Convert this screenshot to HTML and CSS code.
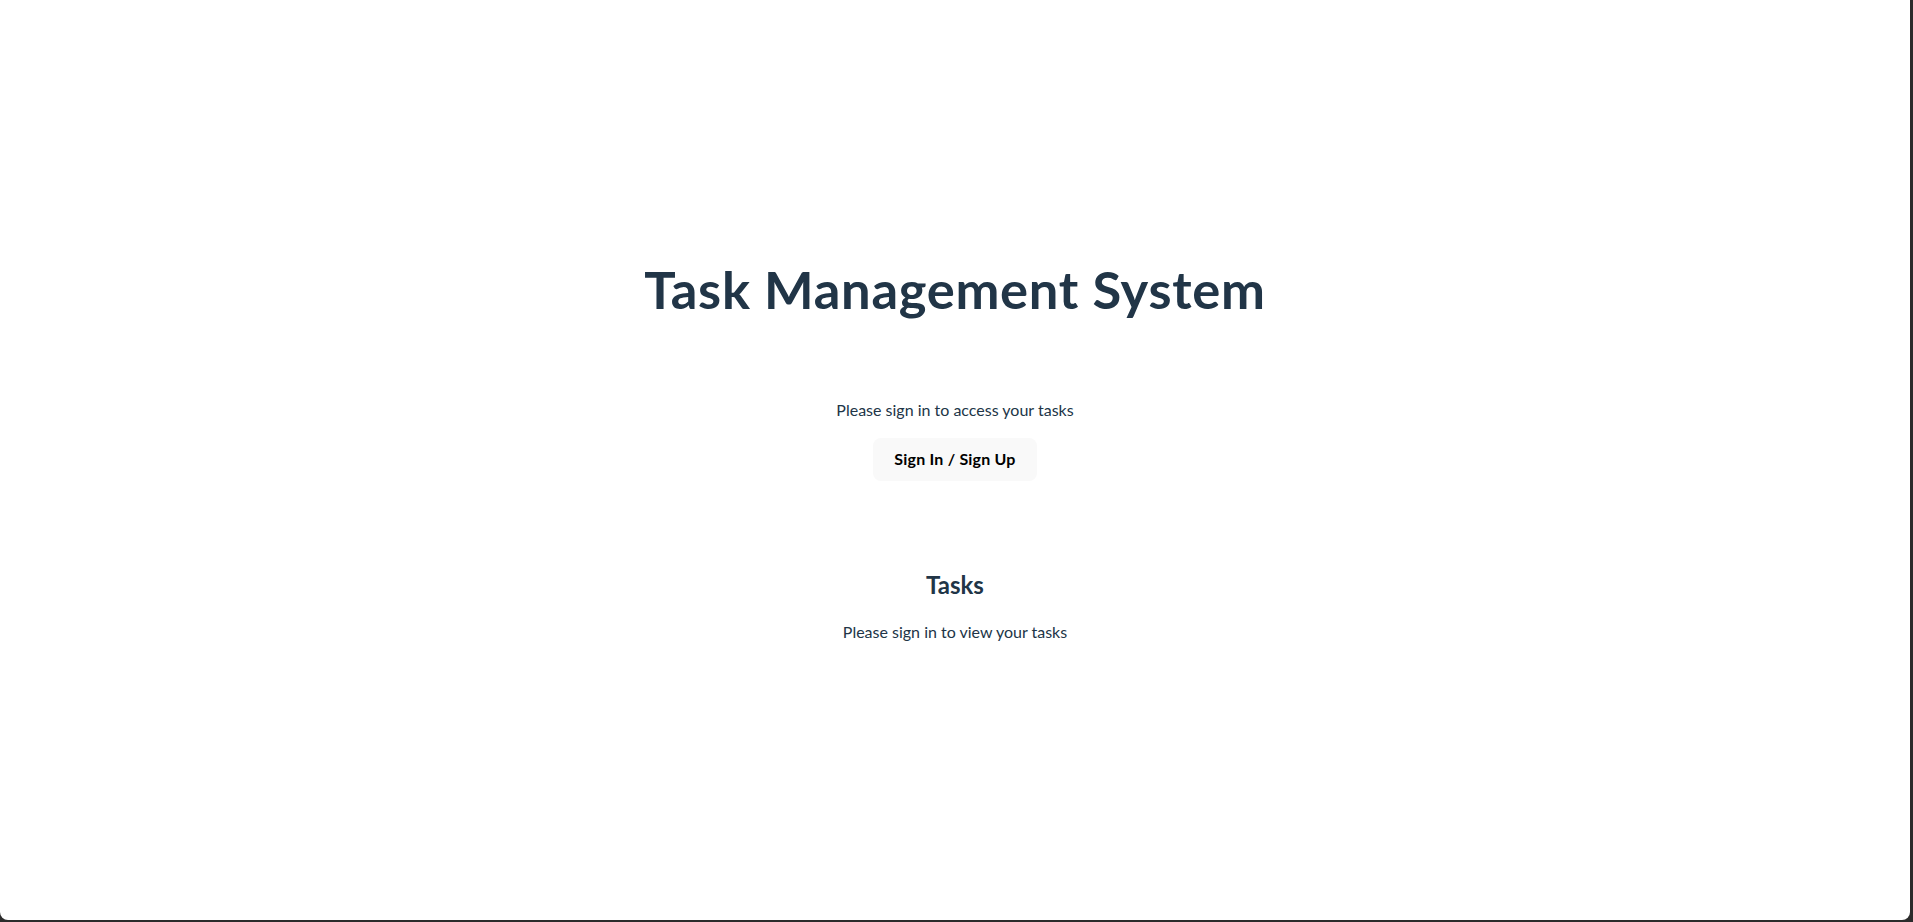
FILE: index.html
```html
<!DOCTYPE html>
<html lang="en">
<head>
<meta charset="utf-8">
<title>Task Management System</title>
<link rel="stylesheet" href="styles.css">
</head>
<body>
<div class="window">
  <main class="app">
    <h1 class="title">Task Management System</h1>
    <section class="card">
      <p class="note">Please sign in to access your tasks</p>
      <button class="btn" type="button">Sign In / Sign Up</button>
    </section>
    <section class="tasks">
      <h2 class="tasks-title">Tasks</h2>
      <p class="note">Please sign in to view your tasks</p>
    </section>
  </main>
</div>
</body>
</html>
```
FILE: styles.css
```css
html {
  background: #2b2b2b;
}
body {
  margin: 0;
  font-family: Lato, "Open Sans", sans-serif;
  color: #213547;
  line-height: 1.5;
  font-size: 16px;
}
.window {
  width: 1910px;
  height: 920px;
  background: #ffffff;
  border-radius: 0 0 8px 8px;
  overflow: hidden;
}
.app {
  display: flex;
  flex-direction: column;
  align-items: center;
  text-align: center;
  padding-top: 260px;
}
.title {
  margin: 0;
  font-size: 52.5px;
  line-height: 1.1;
  font-weight: 700;
  letter-spacing: 0.7px;
}
.card {
  margin-top: 80px;
  display: flex;
  flex-direction: column;
  align-items: center;
  gap: 16px;
}
.note {
  margin: 0;
  font-size: 16px;
  line-height: 24px;
}
.btn {
  box-sizing: border-box;
  height: 43px;
  padding: 0 20px;
  border: 1px solid transparent;
  border-radius: 8px;
  background: #f9f9f9;
  color: #000;
  font-family: inherit;
  font-size: 16px;
  font-weight: 700;
  letter-spacing: 0.2px;
  line-height: 24px;
  cursor: pointer;
}
.tasks {
  margin-top: 86px;
  display: flex;
  flex-direction: column;
  align-items: center;
  gap: 17px;
}
.tasks-title {
  margin: 0;
  font-size: 24px;
  line-height: 36px;
  font-weight: 700;
}
```
